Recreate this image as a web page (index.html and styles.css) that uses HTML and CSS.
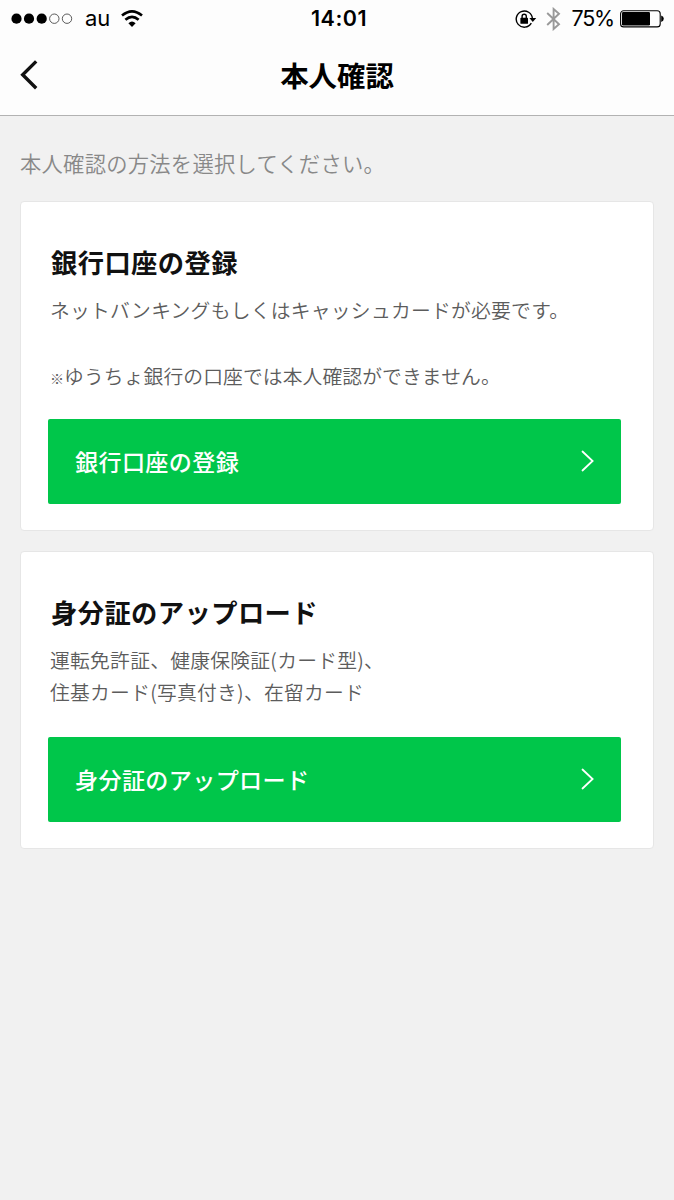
FILE: index.html
```html
<!DOCTYPE html>
<html lang="ja">
<head>
<meta charset="utf-8">
<title>本人確認</title>
<link rel="stylesheet" href="styles.css">
</head>
<body>

<header id="header">
	<div id="status">
		<div class="status_left">
			<svg class="signal" width="62" height="12" viewBox="0 0 62 12">
				<circle cx="5.5" cy="5.7" r="5.1"/>
				<circle cx="18" cy="5.7" r="5.1"/>
				<circle cx="30.7" cy="5.7" r="5.1"/>
				<circle class="off" cx="43.3" cy="5.7" r="4.7"/>
				<circle class="off" cx="56" cy="5.7" r="4.7"/>
			</svg>
			<span class="carrier">au</span>
			<svg class="wifi" width="22" height="17" viewBox="0 0 22 17">
				<path class="arc" d="M1 5.6 Q11 -2.8 21 5.6"/>
				<path class="arc" d="M4.4 9.8 Q11 3.8 17.6 9.8"/>
				<path d="M7.4 13.3 Q11 9.8 14.6 13.3 L11 17Z"/>
			</svg>
		</div>
		<div class="clock">14:01</div>
		<div class="status_right">
			<svg class="lock" width="22" height="18" viewBox="0 0 22 18">
				<path class="ring" d="M16.3 13.2 A8.1 8.1 0 1 1 17.4 8.6"/>
				<path d="M14.4 7.9 H21.2 L17.8 12.1Z"/>
				<rect x="5.4" y="7.8" width="7.6" height="6" rx=".6"/>
				<path class="ring" d="M7.1 8.5 V6.4 a2.1 2.1 0 0 1 4.2 0 V8.5"/>
			</svg>
			<svg class="bluetooth" width="15" height="24" viewBox="0 0 15 24">
				<path d="M1.2 6 L13 17.2 L7.6 22 V2 L13 6.8 L1.2 18"/>
			</svg>
			<span class="percent">75%</span>
			<svg class="battery" width="44" height="18" viewBox="0 0 44 18">
				<rect class="case" x=".6" y=".7" width="39.6" height="16.2" rx="3"/>
				<rect x="2" y="2.1" width="28" height="13.4" rx="1.2"/>
				<path d="M41.2 5.6 q2.6 1 2.6 3.2 t-2.6 3.2Z"/>
			</svg>
		</div>
	</div>
	<div id="nav">
		<svg class="back" width="20" height="32" viewBox="0 0 20 32">
			<path d="M17.2 2.4 L3.7 15.8 L17.2 29.2"/>
		</svg>
		<h1>本人確認</h1>
	</div>
</header>

<main>
	<p class="lead">本人確認の方法を選択してください。</p>

	<section class="card bank">
		<h2>銀行口座の登録</h2>
		<p>ネットバンキングもしくはキャッシュカードが必要です。</p>
		<p class="note"><span class="mark">※</span>ゆうちょ銀行の口座では本人確認ができません。</p>
		<a class="button">銀行口座の登録
			<svg width="14" height="22" viewBox="0 0 14 22"><path d="M1.5 1.5 L11.6 11 L1.5 20.5"/></svg>
		</a>
	</section>

	<section class="card upload">
		<h2>身分証のアップロード</h2>
		<p>運転免許証、健康保険証(カード型)、<br>住基カード(写真付き)、在留カード</p>
		<a class="button">身分証のアップロード
			<svg width="14" height="22" viewBox="0 0 14 22"><path d="M1.5 1.5 L11.6 11 L1.5 20.5"/></svg>
		</a>
	</section>
</main>

</body>
</html>
```
FILE: styles.css
```css
* {
	box-sizing: border-box;
}

body {
	margin: 0px;
	background: #f1f1f1;
	color: #111;
	font-family: "Noto Sans CJK JP", sans-serif;
}

h1, h2, p {
	margin: 0px;
}

svg {
	display: block;
	flex: none;
}

/* status bar + navigation */
#header {
	height: 116px;
	background: #fdfdfd;
	border-bottom: 1px solid #b2b2b2;
}

#status {
	display: grid;
	grid-template-columns: 1fr auto 1fr;
	height: 37px;
	padding: 0px 10px 0px 11px;
	align-items: center;
	color: #000;
	font-family: Inter, sans-serif;
	font-size: 22px;
	line-height: 37px;
}
.status_left, .status_right {
	display: flex;
	align-items: center;
}
.status_right {
	justify-content: flex-end;
}
.signal .off {
	fill: none;
	stroke: #333;
	stroke-width: .8;
}
.carrier {
	margin: 0px 11px 0px 12px;
}
.wifi {
	margin-top: -1px;
}
.wifi .arc {
	fill: none;
	stroke: #000;
	stroke-width: 2.6;
}
.clock {
	padding-left: 3px;
	font-size: 21.5px;
	font-weight: 600;
	letter-spacing: .5px;
}
.lock .ring {
	fill: none;
	stroke: #000;
	stroke-width: 1.4;
}
.bluetooth {
	margin: 0px 10px 0px 9px;
}
.bluetooth path {
	fill: none;
	stroke: #999;
	stroke-width: 1.9;
}
.percent {
	margin-right: 6px;
	font-size: 21.5px;
	letter-spacing: -1.2px;
}
.battery .case {
	fill: none;
	stroke: #000;
	stroke-width: 1.1;
}

#nav {
	display: grid;
	grid-template-columns: 1fr auto 1fr;
	height: 76px;
	padding: 0px 19px;
	align-items: center;
}
h1 {
	color: #000;
	font-size: 28.4px;
	font-weight: 700;
	line-height: 76px;
}
.back path {
	fill: none;
	stroke: #111;
	stroke-width: 3.4;
}

/* content */
main {
	padding: 0px 20px;
}
.lead {
	height: 85px;
	padding-top: 31px;
	color: #888;
	font-size: 21.3px;
	font-weight: 350;
	line-height: 32px;
	letter-spacing: .25px;
}

.card {
	margin-bottom: 20px;
	padding: 39px 32px 27px 27px;
	background: #fff;
	border: 1px solid #e6e6e6;
	border-radius: 4px;
}
.bank {
	height: 330px;
}
.upload {
	height: 298px;
}
.card h2 {
	padding-left: 3px;
	font-size: 26.3px;
	font-weight: 700;
	line-height: 42px;
	letter-spacing: .4px;
}
.card p {
	padding: 11px 0px 0px 2px;
	color: #5c5c5c;
	font-size: 19.8px;
	font-weight: 350;
	line-height: 32px;
	letter-spacing: .25px;
}
.card .note {
	padding-top: 34px;
	letter-spacing: .1px;
}
.mark {
	font-size: 14px;
	font-weight: 700;
	letter-spacing: 0px;
}

.button {
	display: flex;
	justify-content: space-between;
	align-items: center;
	height: 85px;
	margin-top: 25px;
	padding: 0px 26px 1px 27px;
	background: #00c64a;
	border-radius: 2px;
	color: #fff;
	font-size: 23.1px;
	font-weight: 500;
	letter-spacing: .35px;
}
.upload .button {
	margin-top: 29px;
	padding-bottom: 2px;
}
.button path {
	fill: none;
	stroke: #fff;
	stroke-width: 1.8;
	stroke-linecap: round;
}
```
